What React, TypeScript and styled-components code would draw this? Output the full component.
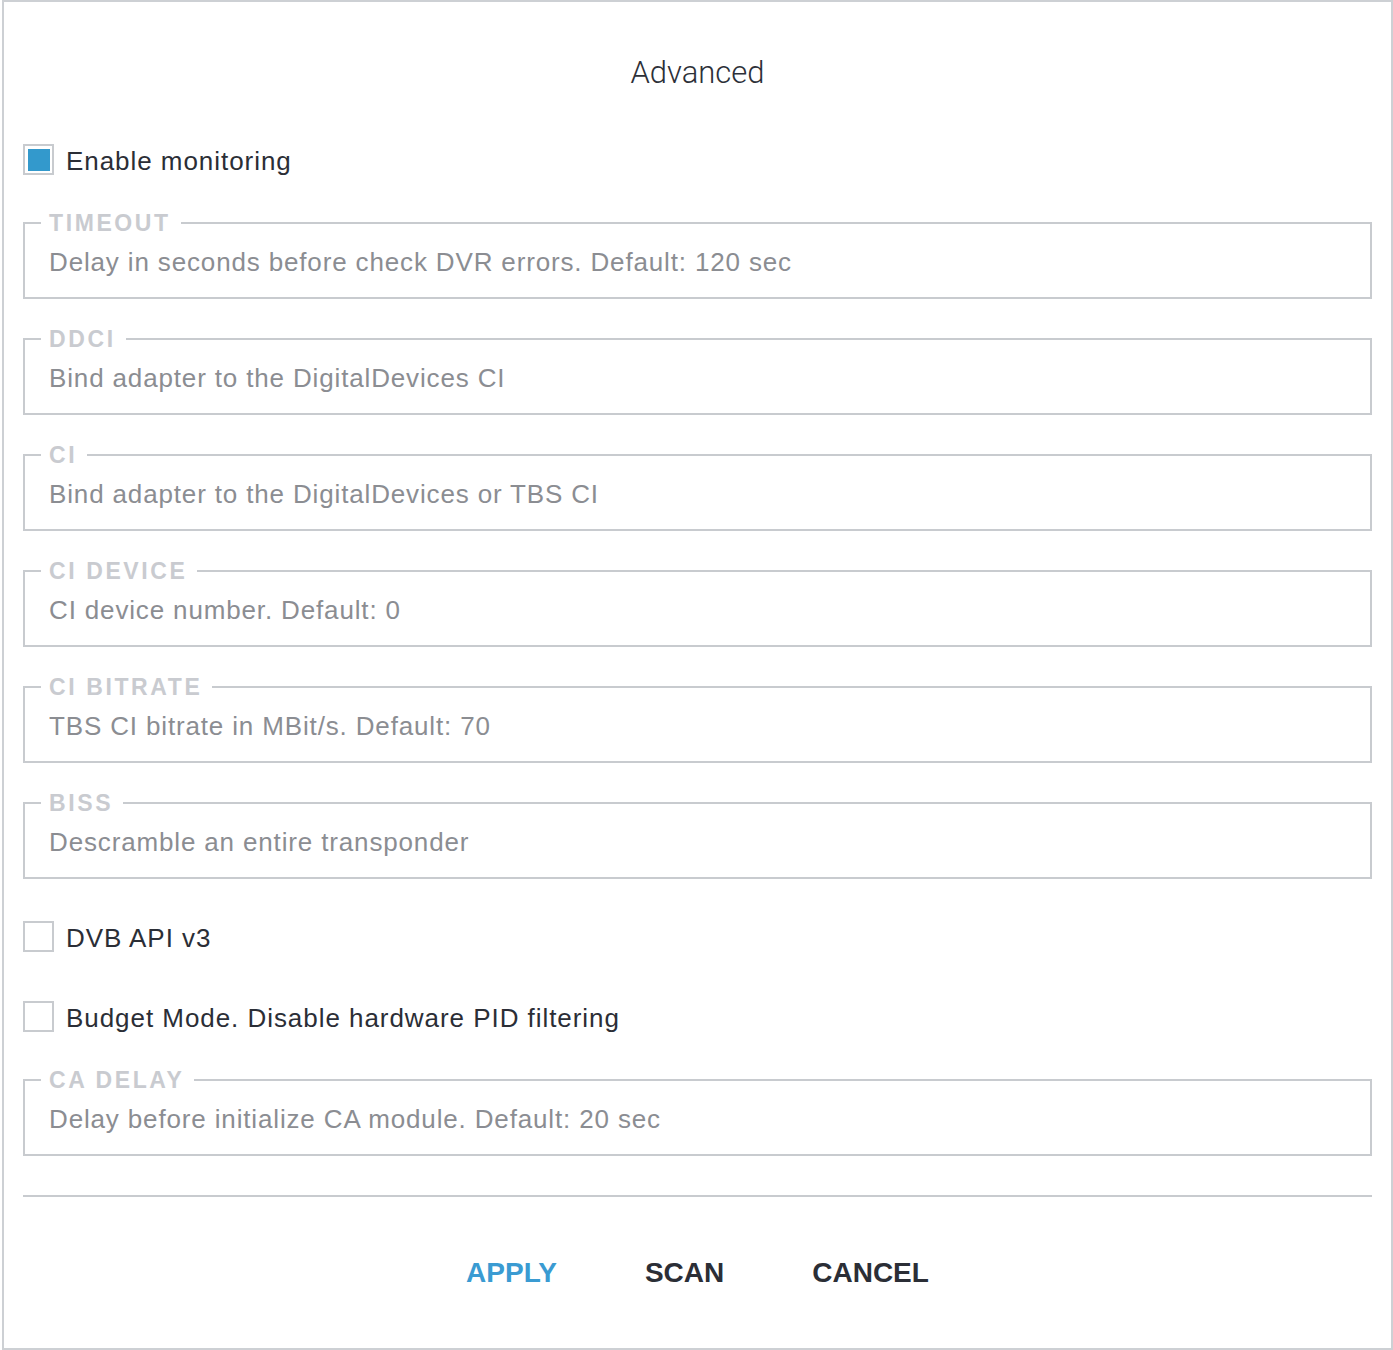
import React from 'react';
import styled, {createGlobalStyle} from 'styled-components';

const GlobalStyle = createGlobalStyle`
  html, body {
    margin: 0;
    padding: 0;
    background: #ffffff;
  }
  body {
    font-family: "Liberation Sans", Arial, sans-serif;
  }
`

const fields = [
    {label: 'Timeout', hint: 'Delay in seconds before check DVR errors. Default: 120 sec'},
    {label: 'DDCI', hint: 'Bind adapter to the DigitalDevices CI'},
    {label: 'CI', hint: 'Bind adapter to the DigitalDevices or TBS CI'},
    {label: 'CI Device', hint: 'CI device number. Default: 0'},
    {label: 'CI Bitrate', hint: 'TBS CI bitrate in MBit/s. Default: 70'},
    {label: 'BISS', hint: 'Descramble an entire transponder'},
]

const Field = ({label, hint}: { label: string, hint: string }) => (
    <FieldBox>
        <Legend>{label}</Legend>
        <Input placeholder={hint}/>
    </FieldBox>
)

const Check = ({checked, label, top}: { checked?: boolean, label: string, top: number }) => (
    <CheckRow top={top}>
        <Box>{checked && <Fill/>}</Box>
        <CheckLabel>{label}</CheckLabel>
    </CheckRow>
)

export default function App() {
    return (
        <>
            <GlobalStyle/>
            <Dialog>
                <Title>Advanced</Title>
                <Check checked label="Enable monitoring" top={51}/>
                <Fields>
                    {fields.map(f => <Field key={f.label} {...f}/>)}
                </Fields>
                <Check label="DVB API v3" top={42}/>
                <Check label="Budget Mode. Disable hardware PID filtering" top={49}/>
                <Fields>
                    <Field label="CA Delay" hint="Delay before initialize CA module. Default: 20 sec"/>
                </Fields>
                <Divider/>
                <Actions>
                    <Action primary>Apply</Action>
                    <Action>Scan</Action>
                    <Action>Cancel</Action>
                </Actions>
            </Dialog>
        </>
    )
}

const Dialog = styled.div`
  box-sizing: border-box;
  margin-left: 2px;
  width: 1391px;
  height: 1350px;
  border: 2px solid #cdd0d4;
  padding: 51px 19px 0 19px;
  display: flex;
  flex-direction: column;
`

const Title = styled.h1`
  margin: 0;
  font-family: "Roboto", "Liberation Sans", sans-serif;
  font-weight: 300;
  font-size: 31px;
  line-height: 40px;
  color: #2d3038;
  text-align: center;
`

const CheckRow = styled.label<{ top: number }>`
  display: flex;
  align-items: center;
  gap: 12px;
  height: 31px;
  margin-top: ${p => p.top}px;
  cursor: pointer;
`

const Box = styled.span`
  box-sizing: border-box;
  width: 31px;
  height: 31px;
  border: 2px solid #c8cbcf;
  background: #fff;
  display: flex;
  align-items: center;
  justify-content: center;
`

const Fill = styled.span`
  width: 22px;
  height: 22px;
  background: #3399cc;
`

const CheckLabel = styled.span`
  padding-top: 4px;
  font-size: 26px;
  letter-spacing: 0.95px;
  color: #2b2e36;
`

const Fields = styled.div`
  display: flex;
  flex-direction: column;
  gap: 28px;
  margin-top: 36px;
`

const FieldBox = styled.fieldset`
  margin: 0;
  padding: 0 16px 8px 16px;
  border: 2px solid #c8cbcf;
  min-width: 0;
`

const Legend = styled.legend`
  padding: 0 10px 0 8px;
  font-size: 23px;
  line-height: 24px;
  font-weight: bold;
  letter-spacing: 2.6px;
  text-transform: uppercase;
  color: #c9cbd0;
`

const Input = styled.input`
  box-sizing: border-box;
  display: block;
  width: 100%;
  height: 54px;
  padding: 0 8px;
  border: none;
  outline: none;
  background: transparent;
  font-family: "Liberation Sans", Arial, sans-serif;
  font-size: 26px;
  letter-spacing: 0.85px;
  color: #2b2e36;

  &::placeholder {
    color: #8b8d92;
  }
`

const Divider = styled.hr`
  margin: 39px 0 0 0;
  border: none;
  border-top: 2px solid #c8cbcf;
`

const Actions = styled.div`
  display: flex;
  justify-content: center;
  margin-top: 56px;
`

const Action = styled.button<{ primary?: boolean }>`
  border: none;
  background: none;
  padding: 0 44px;
  font-family: "Liberation Sans", Arial, sans-serif;
  font-weight: bold;
  font-size: 28px;
  line-height: 40px;
  text-transform: uppercase;
  color: ${p => p.primary ? '#3a9bd2' : '#2b2e36'};
  cursor: pointer;
`
